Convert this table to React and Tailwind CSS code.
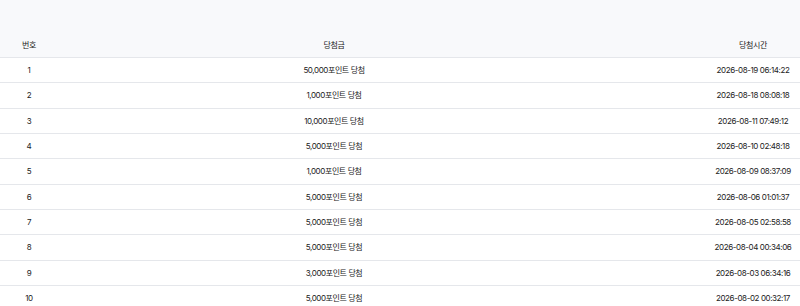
import React from 'react'

const rows = [
    { no: 1, prize: "50,000포인트 당첨", time: "2026-08-19 06:14:22" },
    { no: 2, prize: "1,000포인트 당첨", time: "2026-08-18 08:08:18" },
    { no: 3, prize: "10,000포인트 당첨", time: "2026-08-11 07:49:12" },
    { no: 4, prize: "5,000포인트 당첨", time: "2026-08-10 02:48:18" },
    { no: 5, prize: "1,000포인트 당첨", time: "2026-08-09 08:37:09" },
    { no: 6, prize: "5,000포인트 당첨", time: "2026-08-06 01:01:37" },
    { no: 7, prize: "5,000포인트 당첨", time: "2026-08-05 02:58:58" },
    { no: 8, prize: "5,000포인트 당첨", time: "2026-08-04 00:34:06" },
    { no: 9, prize: "3,000포인트 당첨", time: "2026-08-03 06:34:16" },
    { no: 10, prize: "5,000포인트 당첨", time: "2026-08-02 00:32:17" },
];

const App = () => {
    return (
        <div
            className="w-[800px] h-[306px] overflow-hidden bg-white text-[8px] tracking-[-0.4px] text-[#222]"
            style={{ fontFamily: 'Inter, "Noto Sans CJK KR", sans-serif' }}
        >
            <div className="h-[58px] bg-[#f8f9fb] border-b border-[#e5e7eb] flex items-end pb-[6px]">
                <div className="w-[58px] text-center">번호</div>
                <div className="w-[552px] text-center">당첨금</div>
                <div className="flex-1" />
                <div className="w-[94px] text-center">당첨시간</div>
            </div>
            {rows.map((r) => (
                <div key={r.no} className="h-[25.33px] border-b border-[#e5e7eb] flex items-center">
                    <div className="w-[58px] text-center">{r.no}</div>
                    <div className="w-[552px] text-center">{r.prize}</div>
                    <div className="flex-1" />
                    <div className="w-[94px] text-center">{r.time}</div>
                </div>
            ))}
        </div>
    )
}

export default App
